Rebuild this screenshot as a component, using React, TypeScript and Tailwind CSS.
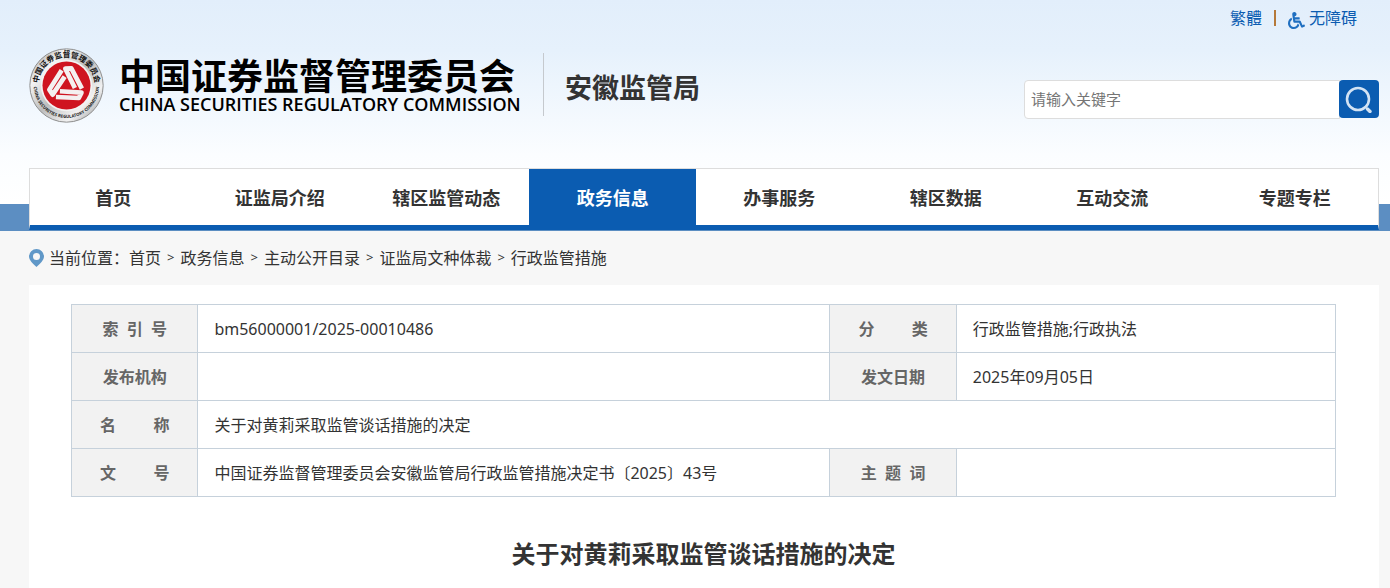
import { FaWheelchair } from "react-icons/fa"

const navItems = [
  "首页",
  "证监局介绍",
  "辖区监管动态",
  "政务信息",
  "办事服务",
  "辖区数据",
  "互动交流",
  "专题专栏",
]

const crumbs = ["首页", "政务信息", "主动公开目录", "证监局文种体裁", "行政监管措施"]

function Emblem() {
  return (
    <svg viewBox="0 0 225 225" className="size-[75px] shrink-0" aria-hidden="true">
      <defs>
        <linearGradient id="silver" x1="0" y1="0" x2="1" y2="1">
          <stop offset="0" stopColor="#8d8d8d" />
          <stop offset="0.25" stopColor="#f4f4f4" />
          <stop offset="0.5" stopColor="#bdbdbd" />
          <stop offset="0.75" stopColor="#f2f2f2" />
          <stop offset="1" stopColor="#808080" />
        </linearGradient>
        <path id="arcTop" d="M 28 112 A 84 84 0 0 1 197 112" />
        <path id="arcBottom" d="M 16 95 A 98 98 0 1 0 209 95" />
        {/* one of the three folded bands, turned round the centre */}
        <path id="band" d="M98 67 L61 125 L71 140 L107 86" />
      </defs>
      <circle cx="112.5" cy="112.5" r="110" fill="url(#silver)" stroke="#8f8f8f" strokeWidth="3" />
      <circle cx="112.5" cy="112.5" r="77" fill="#f3f3f3" />
      <circle cx="112.5" cy="112.5" r="72" fill="#cf1420" />
      <text fontSize="23" fontWeight="700" fill="#111" textAnchor="middle">
        <textPath href="#arcTop" startOffset="50%">中国证券监督管理委员会</textPath>
      </text>
      <text fontSize="13" fontWeight="700" fill="#222" textAnchor="middle">
        <textPath href="#arcBottom" startOffset="50%">CHINA SECURITIES REGULATORY COMMISSION</textPath>
      </text>
      <g fill="none" stroke="#f4f0f0" strokeWidth="14" strokeLinejoin="round">
        <use href="#band" />
        <use href="#band" transform="rotate(120 112.5 112)" />
        <use href="#band" transform="rotate(240 112.5 112)" />
      </g>
    </svg>
  )
}

function Header() {
  return (
    <header className="bg-[linear-gradient(to_bottom,#e2eefb_0,#e6f1fc_50px,#fbfdff_155px,#fff_204px,#5c8ec2_204px)] pl-[29px] pr-[11px]">
      <div className="flex h-9 items-center justify-end gap-2.5 pr-[22px] text-[#0b5cb1]">
        <a href="#traditional">繁體</a>
        <span className="mx-0.5 h-4 w-0.5 bg-[#b5793a]" />
        <a href="#accessible" className="flex items-center gap-1">
          <FaWheelchair className="mt-1 size-[17px] text-[#1f6fc0]" />
          无障碍
        </a>
      </div>

      <div className="flex h-[132px] items-start justify-between pt-3">
        <div className="flex items-start">
          <Emblem />
          <div className="ml-[15px] w-[400px] whitespace-nowrap pt-2 text-black">
            <div className="text-[36px] font-bold leading-[42px]">中国证券监督管理委员会</div>
            <div className="font-['Open_Sans'] text-lg font-semibold leading-3">
              CHINA SECURITIES REGULATORY COMMISSION
            </div>
          </div>
          <div className="ml-6 mt-[5px] flex h-[63px] items-center border-l border-[#c5c9ce] pl-[21px] pt-2 text-[27px] font-bold">
            安徽监管局
          </div>
        </div>

        <form className="mt-8 flex">
          <input
            type="text"
            aria-label="请输入关键字"
            placeholder="请输入关键字"
            className="h-[39px] w-[316px] rounded-l border border-[#ddd] bg-white px-1.5 pb-0.5 text-[15px] outline-none placeholder:text-[#757575]"
          />
          <button
            type="button"
            aria-label="搜索"
            className="-ml-px flex h-[38px] w-10 items-center justify-center rounded bg-[#0b5cb1]"
          >
            <svg viewBox="0 0 28 28" className="size-7" fill="none" stroke="#d3e3f4">
              <circle cx="13" cy="14" r="11" strokeWidth="2.6" />
              <path d="M22.5 24 L25 26.5" strokeWidth="3.4" strokeLinecap="round" />
            </svg>
          </button>
        </form>
      </div>

      <nav className="pb-px">
        <ul className="grid grid-cols-[repeat(7,166fr)_182fr] border-x border-t border-b-[5px] border-[#ddd] border-b-[#0b5cb1] bg-white text-lg font-bold">
          {navItems.map((item) => (
            <li key={item} className="last:pl-4">
              <a
                href="#nav"
                className={
                  item === "政务信息"
                    ? "flex h-14 items-center justify-center bg-[#0b5cb1] pt-0.5 text-white"
                    : "flex h-14 items-center justify-center pt-0.5"
                }
              >
                {item}
              </a>
            </li>
          ))}
        </ul>
      </nav>
    </header>
  )
}

function Breadcrumb() {
  return (
    <div className="flex h-[54px] items-center">
      <svg viewBox="0 0 15 18" className="mr-[5px] h-[18px] w-[15px]">
        <path
          fillRule="evenodd"
          fill="#6098c8"
          d="M7.5 0 A7.5 7.5 0 0 1 15 7.5 C15 11 11 15 7.5 18 C4 15 0 11 0 7.5 A7.5 7.5 0 0 1 7.5 0 Z M7.5 4 A3.5 3.5 0 1 0 7.5 11 A3.5 3.5 0 1 0 7.5 4 Z"
        />
      </svg>
      <span>当前位置：</span>
      {crumbs.map((crumb, i) => (
        <span key={crumb} className="flex items-center">
          {i > 0 && <span className="mx-1.5 text-[13px]">&gt;</span>}
          <a href="#crumb">{crumb}</a>
        </span>
      ))}
    </div>
  )
}

function Label({ children }: { children: string }) {
  return (
    <th className="h-12 whitespace-pre border border-[#c6d1db] bg-[#f2f2f2] text-center font-bold text-[#666]">
      {children}
    </th>
  )
}

function Value({ children, span }: { children?: string; span?: number }) {
  return (
    <td colSpan={span} className="border border-[#c6d1db] px-4">
      {children}
    </td>
  )
}

function InfoTable() {
  return (
    <table className="w-full table-fixed border-collapse">
      <colgroup>
        <col className="w-[10%]" />
        <col className="w-[50%]" />
        <col className="w-[10%]" />
        <col className="w-[30%]" />
      </colgroup>
      <tbody>
        <tr>
          <Label>{"索\u00a0\u00a0引\u00a0\u00a0号"}</Label>
          <Value>bm56000001/2025-00010486</Value>
          <Label>{"分\u00a0\u00a0\u00a0\u00a0\u00a0\u00a0\u00a0\u00a0\u00a0类"}</Label>
          <Value>行政监管措施;行政执法</Value>
        </tr>
        <tr>
          <Label>发布机构</Label>
          <Value />
          <Label>发文日期</Label>
          <Value>2025年09月05日</Value>
        </tr>
        <tr>
          <Label>{"名\u00a0\u00a0\u00a0\u00a0\u00a0\u00a0\u00a0\u00a0\u00a0称"}</Label>
          <Value span={3}>关于对黄莉采取监管谈话措施的决定</Value>
        </tr>
        <tr>
          <Label>{"文\u00a0\u00a0\u00a0\u00a0\u00a0\u00a0\u00a0\u00a0\u00a0号"}</Label>
          <Value>中国证券监督管理委员会安徽监管局行政监管措施决定书〔2025〕43号</Value>
          <Label>{"主\u00a0\u00a0题\u00a0\u00a0词"}</Label>
          <Value />
        </tr>
      </tbody>
    </table>
  )
}

export default function App() {
  return (
    <div className="min-h-screen bg-[#f7f7f7] font-['Noto_Sans','Noto_Sans_CJK_SC',sans-serif] text-base text-[#333]">
      <Header />
      <div className="pl-[29px] pr-[11px]">
        <Breadcrumb />
        <main className="bg-white pb-4 pl-[42px] pr-[43px] pt-[19px]">
          <InfoTable />
          <h1 className="mt-[37px] text-center text-2xl font-bold leading-10">关于对黄莉采取监管谈话措施的决定</h1>
        </main>
      </div>
    </div>
  )
}
